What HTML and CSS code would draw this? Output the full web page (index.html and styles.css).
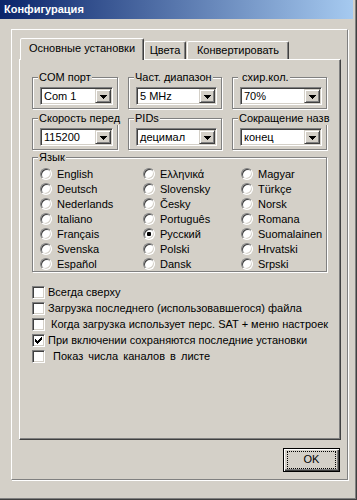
FILE: index.html
```html
<!DOCTYPE html>
<html>
<head>
<meta charset="utf-8">
<title>Конфигурация</title>
<link rel="stylesheet" href="styles.css">
</head>
<body>
<div class="window">
  <div class="titlebar">Конфигурация</div>
  <div class="client">
    <div class="frame">
      <div class="tabs">
        <div class="tab tab-active t1">Основные установки</div>
        <div class="tab t2">Цвета</div>
        <div class="tab t3">Конвертировать</div>
      </div>
      <div class="panel">
        <div class="groups">
          <fieldset class="group"><legend>COM порт</legend>
            <div class="combo"><span class="combo-text">Com 1</span><span class="combo-btn"><svg width="7" height="4" viewBox="0 0 7 4"><path d="M0 0h7v1H0zM1 1h5v1H1zM2 2h3v1H2zM3 3h1v1H3z" fill="#000"/></svg></span></div>
          </fieldset>
          <fieldset class="group"><legend>Част. диапазон</legend>
            <div class="combo"><span class="combo-text">5 MHz</span><span class="combo-btn"><svg width="7" height="4" viewBox="0 0 7 4"><path d="M0 0h7v1H0zM1 1h5v1H1zM2 2h3v1H2zM3 3h1v1H3z" fill="#000"/></svg></span></div>
          </fieldset>
          <fieldset class="group"><legend> схир.кол.</legend>
            <div class="combo"><span class="combo-text">70%</span><span class="combo-btn"><svg width="7" height="4" viewBox="0 0 7 4"><path d="M0 0h7v1H0zM1 1h5v1H1zM2 2h3v1H2zM3 3h1v1H3z" fill="#000"/></svg></span></div>
          </fieldset>
          <fieldset class="group"><legend>Скорость перед</legend>
            <div class="combo"><span class="combo-text">115200</span><span class="combo-btn"><svg width="7" height="4" viewBox="0 0 7 4"><path d="M0 0h7v1H0zM1 1h5v1H1zM2 2h3v1H2zM3 3h1v1H3z" fill="#000"/></svg></span></div>
          </fieldset>
          <fieldset class="group"><legend>PIDs</legend>
            <div class="combo"><span class="combo-text">децимал</span><span class="combo-btn"><svg width="7" height="4" viewBox="0 0 7 4"><path d="M0 0h7v1H0zM1 1h5v1H1zM2 2h3v1H2zM3 3h1v1H3z" fill="#000"/></svg></span></div>
          </fieldset>
          <fieldset class="group"><legend>Сокращение назв</legend>
            <div class="combo"><span class="combo-text">конец</span><span class="combo-btn"><svg width="7" height="4" viewBox="0 0 7 4"><path d="M0 0h7v1H0zM1 1h5v1H1zM2 2h3v1H2zM3 3h1v1H3z" fill="#000"/></svg></span></div>
          </fieldset>
        </div>
        <fieldset class="group lang"><legend>Язык</legend>
          <div class="radios">
            <div class="radio-item"><span class="radio"></span>English</div>
            <div class="radio-item"><span class="radio"></span>Deutsch</div>
            <div class="radio-item"><span class="radio"></span>Nederlands</div>
            <div class="radio-item"><span class="radio"></span>Italiano</div>
            <div class="radio-item"><span class="radio"></span>Français</div>
            <div class="radio-item"><span class="radio"></span>Svenska</div>
            <div class="radio-item"><span class="radio"></span>Español</div>
            <div class="radio-item"><span class="radio"></span>Ελληνικά</div>
            <div class="radio-item"><span class="radio"></span>Slovensky</div>
            <div class="radio-item"><span class="radio"></span>Česky</div>
            <div class="radio-item"><span class="radio"></span>Português</div>
            <div class="radio-item"><span class="radio"><span class="dot"></span></span>Русский</div>
            <div class="radio-item"><span class="radio"></span>Polski</div>
            <div class="radio-item"><span class="radio"></span>Dansk</div>
            <div class="radio-item"><span class="radio"></span>Magyar</div>
            <div class="radio-item"><span class="radio"></span>Türkçe</div>
            <div class="radio-item"><span class="radio"></span>Norsk</div>
            <div class="radio-item"><span class="radio"></span>Romana</div>
            <div class="radio-item"><span class="radio"></span>Suomalainen</div>
            <div class="radio-item"><span class="radio"></span>Hrvatski</div>
            <div class="radio-item"><span class="radio"></span>Srpski</div>
          </div>
        </fieldset>
        <div class="checks">
          <div class="check-item"><span class="checkbox"></span>Всегда сверху</div>
          <div class="check-item"><span class="checkbox"></span>Загрузка последнего (использовавшегося) файла</div>
          <div class="check-item"><span class="checkbox"></span> Когда загрузка использует перс. SAT + меню настроек</div>
          <div class="check-item"><span class="checkbox"><svg width="7" height="7" viewBox="0 0 7 7"><path d="M6 0h1v1H6zM5 1h2v1H5zM0 2h1v1H0zM4 2h3v1H4zM0 3h2v1H0zM3 3h3v1H3zM0 4h5v1H0zM1 5h3v1H1zM2 6h1v1H2z" fill="#000"/></svg></span>При включении сохраняются последние установки</div>
          <div class="check-item wide"><span class="checkbox"></span> Показ числа каналов в листе</div>
        </div>
      </div>
      <div class="buttons">
        <button class="btn-ok" type="button"><span class="focus">OK</span></button>
      </div>
    </div>
  </div>
</div>
</body>
</html>
```

FILE: styles.css
```css
* {
  box-sizing: border-box;
}

html, body {
  margin: 0;
  padding: 0;
}

body {
  width: 357px;
  height: 500px;
  overflow: hidden;
  background: #d4d0c8;
  color: #000;
  font-family: "Liberation Sans", Arial, sans-serif;
  font-size: 11px;
}

.window {
  width: 357px;
  height: 500px;
  padding: 0 4px 4px 0;
  box-shadow: inset -1px -1px 0 #404040, inset -2px -2px 0 #808080;
}

.titlebar {
  height: 19px;
  padding-left: 4px;
  background: linear-gradient(to right, #0a246a, #a6caf0);
  color: #fff;
  font-weight: bold;
  line-height: 19px;
}

.client {
  padding: 10px 0 0 11px;
}

.frame {
  display: flex;
  flex-direction: column;
  width: 337px;
  height: 451px;
  padding: 8px 6px 7px 7px;
  border: 1px solid;
  border-color: #fff #808080 #808080 #fff;
  box-shadow: 1px 1px 0 #fff;
}

.tabs {
  display: flex;
  align-items: flex-end;
  height: 21px;
  padding-left: 1px;
}

.tab {
  height: 18px;
  padding-top: 2px;
  border: 1px solid;
  border-bottom: 0;
  border-color: #fff #404040 transparent #fff;
  border-radius: 2px 2px 0 0;
  box-shadow: inset -1px 0 0 #808080;
  line-height: 13px;
  text-align: center;
  white-space: nowrap;
}

.tab-active {
  position: relative;
  z-index: 1;
  height: 22px;
  margin-bottom: -1px;
  padding-top: 3px;
  background: #d4d0c8;
}

.t1 { width: 124px; }
.t2 { width: 42px; }
.t3 { width: 102px; margin-left: 1px; }

.panel {
  height: 381px;
  padding: 11px 12px 0;
  border: 1px solid;
  border-color: #fff #404040 #404040 #fff;
  box-shadow: inset -1px -1px 0 #808080;
}

.groups {
  display: grid;
  grid-template-columns: 86px 94px 95px;
  column-gap: 10px;
  row-gap: 3px;
}

.group {
  min-width: 0;
  margin: 0;
  padding: 0 0 3px;
  border: 1px solid #808080;
  box-shadow: 1px 1px 0 #fff, inset 1px 1px 0 #fff;
}

.group legend {
  width: max-content;
  margin-left: 5px;
  padding: 0 1px;
  background: #d4d0c8;
  line-height: 13px;
  white-space: pre;
}

.combo {
  display: flex;
  align-items: center;
  width: calc(100% - 11px);
  height: 18px;
  margin: 3px 0 0 7px;
  padding: 1px;
  background: #fff;
  border: 1px solid;
  border-color: #808080 #fff #fff #808080;
  box-shadow: inset 1px 1px 0 #404040, inset -1px -1px 0 #d4d0c8;
}

.combo-text {
  flex: 1;
  padding-left: 2px;
  line-height: 14px;
  white-space: nowrap;
}

.combo-btn {
  display: flex;
  align-items: center;
  justify-content: center;
  flex: none;
  width: 16px;
  height: 14px;
  padding-top: 1px;
  background: #d4d0c8;
  border: 1px solid;
  border-color: #d4d0c8 #404040 #404040 #d4d0c8;
  box-shadow: inset 1px 1px 0 #fff, inset -1px -1px 0 #808080;
}

.combo-btn svg {
  display: block;
}

.lang {
  width: 295px;
  margin-top: 1px;
  padding-bottom: 0;
}

.radios {
  display: grid;
  grid-template-columns: 103px 98px 1fr;
  grid-template-rows: repeat(7, 15px);
  grid-auto-flow: column;
  margin: 2px 0 0 7px;
}

.radio-item {
  display: flex;
  align-items: center;
  gap: 5px;
  white-space: nowrap;
}

.radio {
  display: flex;
  align-items: center;
  justify-content: center;
  flex: none;
  width: 12px;
  height: 12px;
  border-radius: 50%;
  background: #fff;
  border: 1px solid;
  border-color: #808080 #fff #fff #808080;
  box-shadow: inset 1px 1px 0 #404040, inset -1px -1px 0 #d4d0c8;
}

.dot {
  width: 4px;
  height: 4px;
  border-radius: 1px;
  background: #000;
}

.checks {
  margin-top: 12px;
}

.check-item {
  display: flex;
  align-items: center;
  gap: 3px;
  height: 16px;
  white-space: pre;
}

.check-item.wide {
  word-spacing: 2px;
}

.checkbox {
  display: flex;
  align-items: center;
  justify-content: center;
  flex: none;
  width: 13px;
  height: 13px;
  background: #fff;
  border: 1px solid;
  border-color: #808080 #fff #fff #808080;
  box-shadow: inset 1px 1px 0 #404040, inset -1px -1px 0 #d4d0c8;
}

.checkbox svg {
  display: block;
}

.buttons {
  display: flex;
  justify-content: flex-end;
  margin-top: 8px;
  padding-right: 1px;
}

.btn-ok {
  display: block;
  width: 57px;
  height: 24px;
  margin: 0;
  padding: 2px 3px;
  appearance: none;
  background: #d4d0c8;
  border: 1px solid #000;
  border-radius: 0;
  box-shadow: inset 1px 1px 0 #fff, inset -1px -1px 0 #404040, inset -2px -2px 0 #808080;
  color: #000;
  font: inherit;
}

.focus {
  display: block;
  height: 100%;
  border: 1px dotted #000;
  line-height: 15px;
  text-align: center;
}
```
